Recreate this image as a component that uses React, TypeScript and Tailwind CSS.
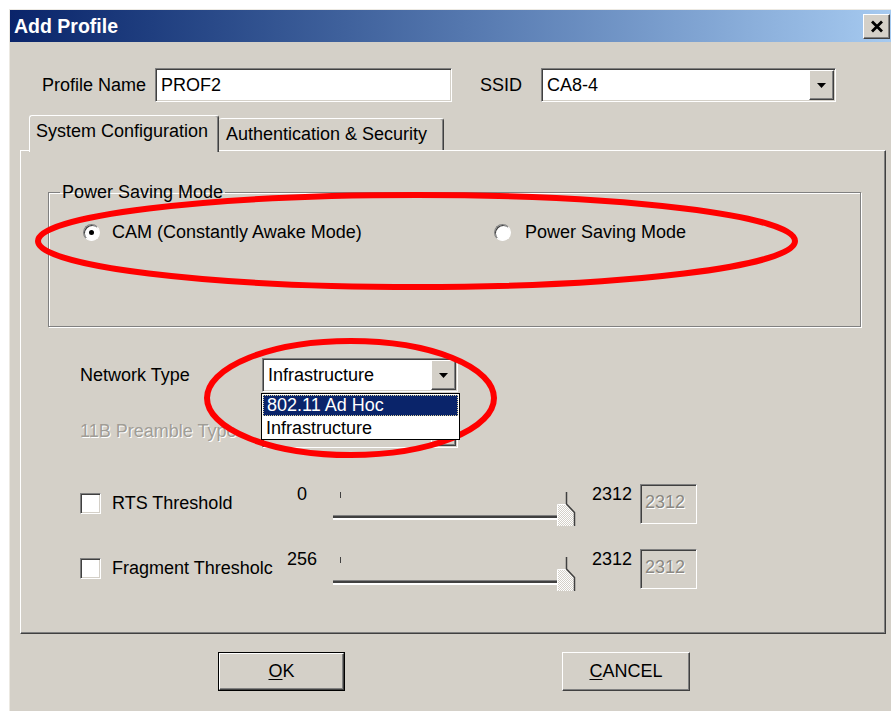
import React from 'react';

// classic 3D edges
const raised =
  'bg-[#d4d0c8] border border-t-white border-l-white border-b-[#404040] border-r-[#404040] shadow-[inset_-1px_-1px_0_#808080]';
const sunken =
  'border border-t-[#808080] border-l-[#808080] border-b-white border-r-white shadow-[inset_1px_1px_0_#404040,inset_-1px_-1px_0_#d4d0c8]';

function DownArrow() {
  return (
    <svg width="9" height="5" viewBox="0 0 9 5">
      <path d="M0 0h9L4.5 5z" fill="#000" />
    </svg>
  );
}

function Combo({ value, className, disabled }: { value?: string; className: string; disabled?: boolean }) {
  return (
    <div className={`flex h-[34px] p-[1px] ${sunken} ${disabled ? 'bg-[#d4d0c8]' : 'bg-white'} ${className}`}>
      <div className="flex flex-1 items-center pl-[4px]">{value}</div>
      <div className={`flex w-[25px] items-center justify-center ${raised}`}>
        <DownArrow />
      </div>
    </div>
  );
}

function Radio({ checked }: { checked?: boolean }) {
  return (
    <span className="flex h-[17px] w-[17px] items-center justify-center rounded-full border border-t-[#808080] border-l-[#808080] border-b-white border-r-white bg-white shadow-[inset_1px_1px_0_#404040]">
      {checked && <span className="h-[5px] w-[5px] rounded-full bg-black" />}
    </span>
  );
}

function Checkbox() {
  return <span className={`mt-[9px] block h-[21px] w-[21px] bg-white ${sunken}`} />;
}

function Slider({ id }: { id: string }) {
  return (
    <svg className="ml-[10px] overflow-visible" width="246" height="40">
      <defs>
        <pattern id={id} width="2" height="2" patternUnits="userSpaceOnUse">
          <rect width="2" height="2" fill="#d4d0c8" />
          <rect width="1" height="1" fill="#fff" />
          <rect x="1" y="1" width="1" height="1" fill="#fff" />
        </pattern>
      </defs>
      <line x1="8.5" y1="8" x2="8.5" y2="14" stroke="#404040" />
      <rect x="1" y="31" width="228" height="1" fill="#808080" />
      <rect x="1" y="32" width="228" height="2" fill="#404040" />
      <rect x="1" y="34" width="228" height="2" fill="#fff" />
      <polygon points="225,20 234,20 243,29 243,42 225,42" fill={`url(#${id})`} />
      <polyline points="225.5,42 225.5,20.5 234,20.5" fill="none" stroke="#fff" />
      <polyline points="234.5,8 234.5,20 242.5,28.5 242.5,42" fill="none" stroke="#404040" strokeWidth="1.5" />
    </svg>
  );
}

function ThresholdRow({ label, min, id, className }: { label: string; min: string; id: string; className: string }) {
  return (
    <div className={`flex h-[40px] items-start pl-[59px] ${className}`}>
      <Checkbox />
      <span className="ml-[11px] mt-[9px] w-[160px] whitespace-nowrap">{label}</span>
      <span className="ml-[10px] w-[40px] text-center">{min}</span>
      <Slider id={id} />
      <span className="ml-[14px] w-[48px]">2312</span>
      <div className={`h-[40px] w-[57px] bg-[#d4d0c8] pl-[4px] pt-[7px] text-[#8a8882] [text-shadow:1px_1px_0_#fff] ${sunken}`}>
        2312
      </div>
    </div>
  );
}

export default function App() {
  return (
    <div className="relative h-[713px] w-[893px] overflow-hidden bg-white pl-[9px] pt-[9px] font-['Liberation_Sans',Arial,sans-serif] text-[18px] leading-[21px] text-black">
      <div className="flex h-[702px] w-[882px] flex-col border-l border-t border-l-[#ece9e2] border-t-[#ece9e2] bg-[#d4d0c8]">
        {/* title bar */}
        <div className="flex h-[32px] items-center justify-between bg-linear-to-r from-[#0a246a] to-[#a6caf0] pl-[4px] pr-[1px]">
          <span className="text-[19.5px] font-bold text-white">Add Profile</span>
          <div className={`flex h-[25px] w-[27px] items-center justify-center ${raised}`}>
            <svg width="14" height="13" viewBox="0 0 14 13">
              <path d="M2 1.5l10 10M12 1.5l-10 10" stroke="#000" strokeWidth="2.8" />
            </svg>
          </div>
        </div>

        <div className="mt-[26px] flex h-[34px] items-center pl-[32px]">
          <span className="w-[113px]">Profile Name</span>
          <div className={`flex h-[34px] w-[297px] items-center bg-white pl-[5px] ${sunken}`}>PROF2</div>
          <span className="ml-[28px] w-[61px]">SSID</span>
          <Combo value="CA8-4" className="w-[295px]" />
        </div>

        {/* tabs */}
        <div className="mt-[13px] flex items-end pl-[19px]">
          <div className="relative z-10 -mb-[2px] h-[37px] w-[190px] rounded-t-[3px] border-l border-r border-t border-l-white border-t-white border-r-[#404040] bg-[#d4d0c8] pl-[6px] pt-[5px] shadow-[inset_-1px_0_0_#808080]">
            System Configuration
          </div>
          <div className="h-[32px] w-[225px] rounded-t-[3px] border-r border-t border-t-white border-r-[#404040] bg-[#d4d0c8] pl-[7px] pt-[5px] shadow-[inset_-1px_0_0_#808080]">
            Authentication &amp; Security
          </div>
        </div>

        <div className="ml-[10px] h-[484px] w-[866px] border border-t-white border-l-white border-b-[#404040] border-r-[#404040] shadow-[inset_-1px_-1px_0_#808080]">
          <fieldset className="ml-[27px] mt-[31px] h-[145px] w-[813px] border border-[#808080] shadow-[inset_1px_1px_0_#fff,1px_1px_0_#fff]">
            <legend className="ml-[11px] px-[2px] leading-[20px]">Power Saving Mode</legend>
            <div className="mt-[20px] flex h-[20px] items-center pl-[34px]">
              <div className="flex w-[411px] items-center">
                <Radio checked />
                <span className="ml-[12px]">CAM (Constantly Awake Mode)</span>
              </div>
              <Radio />
              <span className="ml-[14px]">Power Saving Mode</span>
            </div>
          </fieldset>

          <div className="mt-[31px] flex items-center pl-[59px]">
            <span className="w-[182px]">Network Type</span>
            <div className="relative">
              <Combo value="Infrastructure" className="w-[196px]" />
              <div className="absolute left-[-1px] top-[35px] z-10 w-[199px] border border-black bg-white">
                <div className="m-[1px] h-[21px] border border-dotted border-[#d9cf9a] bg-[#0a246a] pl-[3px] leading-[19px] text-white">
                  802.11 Ad Hoc
                </div>
                <div className="h-[22px] pl-[4px] leading-[22px]">Infrastructure</div>
              </div>
            </div>
          </div>

          <div className="mt-[22px] flex items-center pl-[59px]">
            <span className="w-[182px] text-[#a09d96] [text-shadow:1px_1px_0_#fff]">11B Preamble Type</span>
            <Combo disabled className="w-[196px]" />
          </div>

          <ThresholdRow label="RTS Threshold" min="0" id="rtsThumb" className="mt-[36px]" />
          <ThresholdRow label="Fragment Thresholc" min="256" id="fragThumb" className="mt-[25px]" />
        </div>

        <div className="mt-[18px] flex pl-[208px]">
          <div className="h-[39px] w-[127px] border border-black">
            <div className={`flex h-full items-center justify-center ${raised}`}>
              <span className="underline underline-offset-2">O</span>K
            </div>
          </div>
          <div className={`ml-[217px] flex h-[39px] w-[128px] items-center justify-center ${raised}`}>
            <span className="underline underline-offset-2">C</span>ANCEL
          </div>
        </div>
      </div>

      {/* red marker rings */}
      <svg className="pointer-events-none absolute left-0 top-0" width="893" height="713">
        <ellipse cx="416.5" cy="241" rx="378.5" ry="46" fill="none" stroke="#ff0000" strokeWidth="6" />
        <ellipse cx="350.5" cy="398" rx="143.5" ry="57" fill="none" stroke="#ff0000" strokeWidth="6" />
      </svg>
    </div>
  );
}
